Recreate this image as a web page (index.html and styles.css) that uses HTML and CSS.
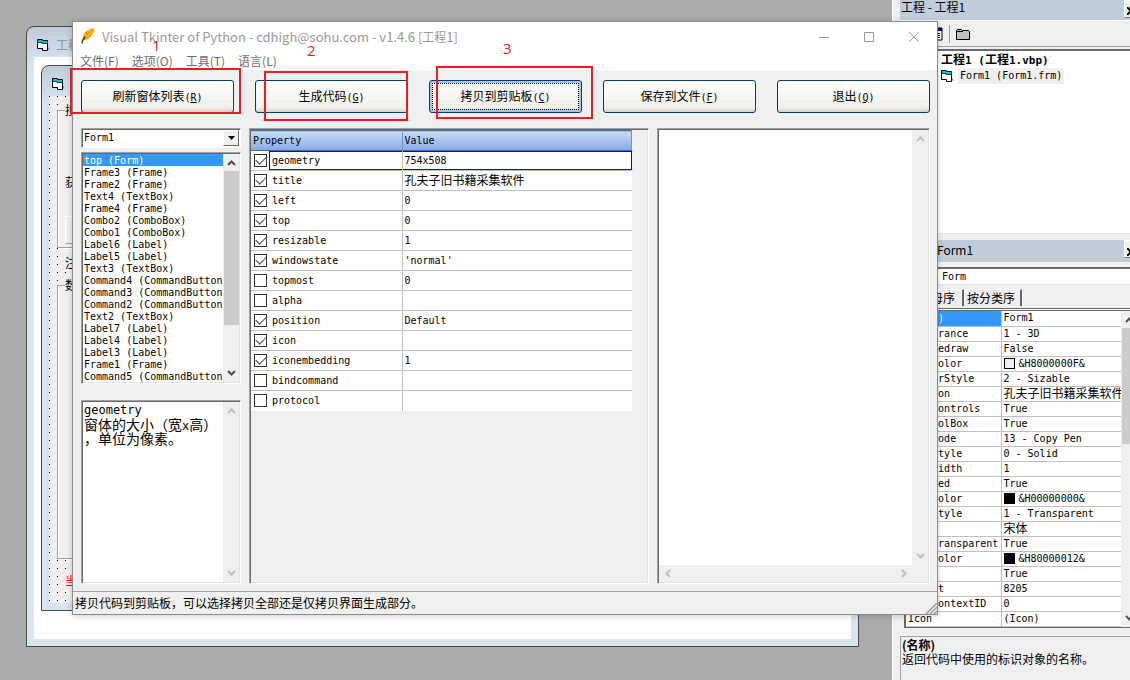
FILE: index.html
```html
<!DOCTYPE html>
<html lang="zh-CN">
<head>
<meta charset="utf-8">
<title>Visual Tkinter of Python</title>
<link rel="stylesheet" href="styles.css">
</head>
<body>
<svg class="defs" aria-hidden="true">
  <symbol id="form-icon" viewBox="0 0 13 12">
    <path d="M.5 .5H5.500V1.500H10.500V11.500H5.500V9.500H.5Z" fill="#fff" stroke="#000"/>
    <path d="M1 1h4v1h5v2H5V3H1Z" fill="#0cc"/>
    <path d="M1 3.500h4v1h5" fill="none" stroke="#000" stroke-width=".8"/>
    <path d="M11 8l2 2.500h-2z" fill="#888"/>
  </symbol>
  <symbol id="up" viewBox="0 0 9 6"><path d="M1 5l3.500-3.500L8 5" fill="none" stroke="currentColor" stroke-width="2"/></symbol>
  <symbol id="down" viewBox="0 0 9 6"><path d="M1 1l3.500 3.500L8 1" fill="none" stroke="currentColor" stroke-width="2"/></symbol>
  <symbol id="left" viewBox="0 0 6 9"><path d="M5 1L1.500 4.500 5 8" fill="none" stroke="currentColor" stroke-width="2"/></symbol>
  <symbol id="right" viewBox="0 0 6 9"><path d="M1 1l3.500 3.500L1 8" fill="none" stroke="currentColor" stroke-width="2"/></symbol>
</svg>

<main class="workspace">
  <section class="mdi">
    <header class="mdi-title"><svg class="form-icon"><use href="#form-icon"/></svg><span>工程1</span></header>
    <div class="mdi-body">
      <div class="designer">
        <header class="mdi-title"><svg class="form-icon"><use href="#form-icon"/></svg></header>
        <div class="canvas">
          <div class="frame frame-first"><span class="legend">搜</span><span class="field">获</span><span class="sunken"></span></div>
          <div class="note">注</div>
          <div class="frame frame-second"><span class="legend">数</span></div>
          <div class="note alert">当</div>
        </div>
      </div>
    </div>
  </section>
</main>

<aside class="dock">
  <header class="dock-title"><span>工程 - 工程1</span><button class="dock-close" aria-label="关闭工程"><svg width="8" height="8"><path d="M0 0l8 8M8 0L0 8" stroke="#000" stroke-width="2"/></svg></button></header>
  <div class="dock-tools">
    <button class="tool" aria-label="查看对象"><svg width="14" height="14"><path d="M1 1h12v12H1z" fill="#fff" stroke="#000"/><path d="M1 1h12v3H1z" fill="#008"/><path d="M3 6.500h3M8 6.500h3M3 8.500h3M8 8.500h3M3 10.500h3M8 10.500h3" stroke="#000"/></svg></button>
    <button class="tool tool-folder" aria-label="切换文件夹"><svg width="16" height="14"><path d="M1.500 12.500V3.500l1-1h4l1 1h6l1 1v8z" fill="#c0c0c0" stroke="#000"/><path d="M2 4.500h6" stroke="#000"/></svg></button>
  </div>
  <div class="tree">
    <div class="tree-root"><span class="cj">工程</span>1 (<span class="cj">工程</span>1.vbp)</div>
    <div class="tree-item"><svg class="form-icon"><use href="#form-icon"/></svg><span class="tree-label">Form1 (Form1.frm)</span></div>
  </div>
  <header class="dock-title props-title"><span>Form1</span><button class="dock-close" aria-label="关闭属性"><svg width="8" height="8"><path d="M0 0l8 8M8 0L0 8" stroke="#000" stroke-width="2"/></svg></button></header>
  <select class="object" aria-label="对象"><option>Form</option></select>
  <div class="tabs"><button class="tab cj active">按字母序</button><button class="tab cj">按分类序</button></div>
  <div class="props">
    <table class="prop-table">
      <tr><td class="picked">(<span class="cj">名称</span>)</td><td>Form1</td></tr>
      <tr><td>Appearance</td><td>1 - 3D</td></tr>
      <tr><td>AutoRedraw</td><td>False</td></tr>
      <tr><td>BackColor</td><td><i class="swatch"></i>&amp;H8000000F&amp;</td></tr>
      <tr><td>BorderStyle</td><td>2 - Sizable</td></tr>
      <tr><td>Caption</td><td><span class="cj">孔夫子旧书籍采集软件</span></td></tr>
      <tr><td>ClipControls</td><td>True</td></tr>
      <tr><td>ControlBox</td><td>True</td></tr>
      <tr><td>DrawMode</td><td>13 - Copy Pen</td></tr>
      <tr><td>DrawStyle</td><td>0 - Solid</td></tr>
      <tr><td>DrawWidth</td><td>1</td></tr>
      <tr><td>Enabled</td><td>True</td></tr>
      <tr><td>FillColor</td><td><i class="swatch black"></i>&amp;H00000000&amp;</td></tr>
      <tr><td>FillStyle</td><td>1 - Transparent</td></tr>
      <tr><td>Font</td><td><span class="cj">宋体</span></td></tr>
      <tr><td>FontTransparent</td><td>True</td></tr>
      <tr><td>ForeColor</td><td><i class="swatch black"></i>&amp;H80000012&amp;</td></tr>
      <tr><td>HasDC</td><td>True</td></tr>
      <tr><td>Height</td><td>8205</td></tr>
      <tr><td>HelpContextID</td><td>0</td></tr>
      <tr><td>Icon</td><td>(Icon)</td></tr>
    </table>
    <div class="scroll dock-scroll"><svg class="v"><use href="#up"/></svg><i class="thumb"></i><svg class="v"><use href="#down"/></svg></div>
  </div>
  <div class="help"><strong>(名称)</strong><span>返回代码中使用的标识对象的名称。</span></div>
</aside>

<section class="window">
  <header class="title">
    <svg class="feather" width="14" height="16" viewBox="0 0 14 16"><path d="M2 12C1 8 3 4 7 2c2-1 4-2 6-1 1 3-1 5-3 7-2 3-4 4-6 4z" fill="#fdb515"/><path d="M13 1C9 4 5 7 3 12m7-4l-4 2M5 4l1 3" fill="none" stroke="#e78a00"/><path d="M1 15.500c0-3 1.500-5 3-7" fill="none" stroke="#5a3800" stroke-width="1.500"/></svg>
    <h1>Visual Tkinter of Python - cdhigh@sohu.com - v1.4.6 [<span class="title-cj">工程</span>1]</h1>
    <div class="caption-buttons">
      <button aria-label="最小化"><svg width="12" height="12"><path d="M1 6.500h10" stroke="#999"/></svg></button>
      <button aria-label="最大化"><svg width="12" height="12"><path d="M1.500 1.500h9v9h-9z" fill="none" stroke="#999"/></svg></button>
      <button aria-label="关闭"><svg width="12" height="12"><path d="M1 1l10 10M11 1L1 11" stroke="#999"/></svg></button>
    </div>
  </header>
  <nav class="menu"><button>文件(F)</button><button>选项(O)</button><button>工具(T)</button><button>语言(L)</button></nav>
  <div class="actions">
    <button><span class="cj">刷新窗体列表</span>(<u>R</u>)</button>
    <button><span class="cj">生成代码</span>(<u>G</u>)</button>
    <button class="focused"><span class="cj">拷贝到剪贴板</span>(<u>C</u>)</button>
    <button><span class="cj">保存到文件</span>(<u>F</u>)</button>
    <button><span class="cj">退出</span>(<u>Q</u>)</button>
  </div>
  <div class="panes">
    <div class="side">
      <div class="combo"><select aria-label="窗体"><option>Form1</option></select><span class="arrow"><svg width="7" height="4"><path d="M0 0h7L3.500 4z"/></svg></span></div>
      <div class="box list-box">
        <ul class="list">
          <li class="on">top (Form)</li><li>Frame3 (Frame)</li><li>Frame2 (Frame)</li><li>Text4 (TextBox)</li><li>Frame4 (Frame)</li><li>Combo2 (ComboBox)</li><li>Combo1 (ComboBox)</li><li>Label6 (Label)</li><li>Label5 (Label)</li><li>Text3 (TextBox)</li><li>Command4 (CommandButton</li><li>Command3 (CommandButton</li><li>Command2 (CommandButton</li><li>Text2 (TextBox)</li><li>Label7 (Label)</li><li>Label4 (Label)</li><li>Label3 (Label)</li><li>Frame1 (Frame)</li><li>Command5 (CommandButton</li>
        </ul>
        <div class="scroll"><svg class="v"><use href="#up"/></svg><i class="thumb"></i><svg class="v"><use href="#down"/></svg></div>
      </div>
      <div class="box about">
        <div class="about-text">
          <div>geometry</div>
          <div><span class="big">窗体的大小（宽</span>x<span class="big">高）</span></div>
          <div><span class="big">，单位为像素。</span></div>
        </div>
        <div class="scroll idle"><svg class="v"><use href="#up"/></svg><svg class="v"><use href="#down"/></svg></div>
      </div>
    </div>
    <div class="box grid-box">
      <table class="grid">
        <thead><tr><th>Property</th><th>Value</th></tr></thead>
        <tbody>
          <tr class="current"><td><label><input type="checkbox" checked><span>geometry</span></label></td><td>754x508</td></tr>
          <tr><td><label><input type="checkbox" checked><span>title</span></label></td><td><span class="cj">孔夫子旧书籍采集软件</span></td></tr>
          <tr><td><label><input type="checkbox" checked><span>left</span></label></td><td>0</td></tr>
          <tr><td><label><input type="checkbox" checked><span>top</span></label></td><td>0</td></tr>
          <tr><td><label><input type="checkbox" checked><span>resizable</span></label></td><td>1</td></tr>
          <tr><td><label><input type="checkbox" checked><span>windowstate</span></label></td><td>'normal'</td></tr>
          <tr><td><label><input type="checkbox"><span>topmost</span></label></td><td>0</td></tr>
          <tr><td><label><input type="checkbox"><span>alpha</span></label></td><td></td></tr>
          <tr><td><label><input type="checkbox" checked><span>position</span></label></td><td>Default</td></tr>
          <tr><td><label><input type="checkbox" checked><span>icon</span></label></td><td></td></tr>
          <tr><td><label><input type="checkbox" checked><span>iconembedding</span></label></td><td>1</td></tr>
          <tr><td><label><input type="checkbox"><span>bindcommand</span></label></td><td></td></tr>
          <tr><td><label><input type="checkbox"><span>protocol</span></label></td><td></td></tr>
        </tbody>
      </table>
    </div>
    <div class="box code">
      <textarea aria-label="代码"></textarea>
      <div class="scroll idle"><svg class="v"><use href="#up"/></svg><svg class="v"><use href="#down"/></svg></div>
      <div class="scroll-x"><svg class="h"><use href="#left"/></svg><svg class="h"><use href="#right"/></svg></div>
    </div>
  </div>
  <footer class="status"><span class="cj">拷贝代码到剪贴板，可以选择拷贝全部还是仅拷贝界面生成部分。</span><svg class="grip" width="11" height="11"><path d="M0 11L11 0M4 11l7-7M8 11l3-3" stroke="#999" stroke-width="1.500"/></svg></footer>
</section>

<div class="mark mark-1"><b>1</b></div>
<div class="mark mark-2"><b>2</b></div>
<div class="mark mark-3"><b>3</b></div>
</body>
</html>
```
FILE: styles.css
```css
* { box-sizing: border-box; }

body {
  margin: 0;
  min-height: 100vh;
  display: flex;
  position: relative;
  overflow: hidden;
  background: #ababab;
  color: #000;
  font: 10px/12px "DejaVu Sans Mono", "Noto Sans CJK SC", monospace;
}

button, select, textarea, input { font: inherit; color: inherit; margin: 0; padding: 0; border: 0; border-radius: 0; background: none; }
table { border-collapse: collapse; table-layout: fixed; }
th, td { padding: 0; text-align: left; font-weight: normal; white-space: nowrap; overflow: hidden; }
.defs { position: absolute; width: 0; height: 0; }
.cj { font: 12px/12px "Noto Sans CJK SC", sans-serif; }
.form-icon { width: 13px; height: 12px; flex: none; }

/* Designer windows behind the tool */
.workspace { flex: 1; position: relative; min-width: 0; }
.mdi {
  position: absolute;
  inset: 26px 33px 33px 26px;
  display: flex;
  flex-direction: column;
  padding: 0 7px 7px;
  border: 1px solid #484848;
  border-radius: 8px 8px 0 0;
  background: linear-gradient(#bfcddb, #d7e4f2 40px);
}
.mdi-title {
  height: 30px;
  padding: 6px 3px 0;
  display: flex;
  align-items: center;
  gap: 6px;
  color: #8c96a0;
  font: 12px/16px "Noto Sans CJK SC", sans-serif;
}
.mdi-body { flex: 1; display: flex; background: #fff; padding: 8px 8px 28px 7px; }
.designer {
  flex: 1;
  display: flex;
  flex-direction: column;
  padding: 0 7px 7px;
  border: 1px solid #484848;
  border-radius: 8px 8px 0 0;
  background: linear-gradient(#bfcddb, #d7e4f2 40px);
}
.canvas {
  flex: 1;
  padding: 14px 8px 0;
  background: conic-gradient(from 270deg at 1px 1px, #000 90deg, #efefef 0) 0 0 / 8px 8px;
  font: 12px/16px "Noto Sans CJK SC", sans-serif;
}
.frame { border: 1px solid #a0a0a0; box-shadow: 1px 1px #fff, inset 1px 1px #fff; background: #efefef; padding: 0 7px; display: flex; flex-direction: column; }
.frame-first { height: 138px; }
.frame-second { height: 274px; margin-top: 14px; }
.legend { background: #efefef; width: 16px; margin-top: -9px; }
.field { margin-top: 56px; }
.sunken { margin-top: 26px; height: 28px; border: 1px solid #a0a0a0; border-top-color: #fff; border-left-color: #fff; }
.note { margin: 7px 0 0 8px; width: 40px; background: #efefef; }
.alert { margin-top: 14px; color: #f00; }

/* Docked panels */
.dock {
  width: 238px;
  flex: none;
  height: 100vh;
  overflow: hidden;
  display: flex;
  flex-direction: column;
  padding-left: 7px;
  border-left: 1px solid #fff;
  background: #efefef;
}
.dock-title {
  height: 20px;
  flex: none;
  display: flex;
  justify-content: space-between;
  padding-left: 1px;
  background: #bfcddb;
  font: 12px/13px "Noto Sans CJK SC", sans-serif;
}
.dock-close { width: 6px; height: 18px; overflow: hidden; padding-left: 2px; background: #efefef; border: 1px solid #fff; border-width: 1px 0 1px 1px; border-bottom-color: #777; }
.dock-tools { height: 27px; flex: none; display: flex; gap: 6px; padding: 4px 0 0 29px; border-top: 1px solid #fff; border-bottom: 1px solid #a0a0a0; }
.tool { display: flex; height: 18px; align-items: center; }
.tool-folder { border-left: 1px solid #a0a0a0; padding-left: 5px; }
.tree { height: 185px; flex: none; margin-top: 2px; padding: 2px 0 0 41px; border-top: 2px solid #696969; border-bottom: 1px solid #e3e3e3; background: #fff; }
.tree-root { font-weight: bold; font-size: 11px; line-height: 14px; white-space: nowrap; }
.tree-root .cj { font-weight: bold; }
.tree-item { display: flex; align-items: center; gap: 4px; }
.tree-label { background: #efefef; line-height: 16px; padding: 0 2px; }
.props-title { height: 22px; margin-top: 6px; padding-left: 37px; line-height: 20px; }
.object { appearance: none; height: 18px; flex: none; margin-top: 5px; padding-left: 42px; border-top: 2px solid #696969; border-bottom: 1px solid #e3e3e3; background: #fff; }
.tabs { display: flex; height: 23px; flex: none; padding: 4px 0 0; }
.tab { height: 17px; padding: 0 5px 0 3px; border-top: 1px solid #fff; border-right: 2px solid #696969; }
.tab.active { padding: 0 7px; }
.props { flex: none; display: flex; margin-left: 4px; border: solid #696969; border-width: 3px 0 1px 2px; border-top-style: double; background: #fff; }
.prop-table { width: 215px; flex: none; }
.prop-table td { height: 15px; line-height: 12px; border-bottom: 1px solid #c0c0c0; padding-left: 2px; }
.prop-table td:first-child { width: 95px; border-right: 1px solid #c0c0c0; }
.prop-table .picked { background: #39f; color: #fff; }
.swatch { display: inline-block; width: 11px; height: 11px; margin-right: 4px; border: 1px solid #000; background: #efefef; vertical-align: middle; }
.black { background: #000; }
.help { flex: 1; display: flex; flex-direction: column; margin-top: 8px; padding: 1px; border: 1px solid #a0a0a0; border-right: 0; border-bottom: 0; font: 12px/14px "Noto Sans CJK SC", sans-serif; white-space: nowrap; }

/* Main window */
.window {
  position: absolute;
  inset: 21px 192px 65px 72px;
  display: flex;
  flex-direction: column;
  border: 1px solid #8c8c8c;
  background: #efefef;
  box-shadow: 0 1px 6px rgba(0, 0, 0, .2);
}
.title { display: flex; align-items: center; height: 30px; flex: none; padding: 0 17px 0 8px; gap: 7px; background: #fff; color: #999; }
.title h1 { flex: 1; margin: 0; font: 13px/16px "Noto Sans CJK SC", sans-serif; white-space: nowrap; }
.title-cj { font-size: 12px; }
.feather { margin-bottom: 2px; }
.caption-buttons { display: flex; gap: 33px; }
.caption-buttons button { display: flex; }
.menu { display: flex; height: 18px; flex: none; gap: 13px; padding-left: 7px; background: #fff; color: #6d6d6d; font: 12px/18px "Noto Sans CJK SC", sans-serif; }
.menu button { line-height: 18px; }
.actions { display: flex; justify-content: space-between; flex: none; padding: 10px 7px 0 8px; }
.actions button {
  width: 153px;
  height: 33px;
  border: 1px solid #003c74;
  border-radius: 3px;
  background: linear-gradient(#fff, #f0f0ea 85%, #d8d2c4);
}
.actions .focused { box-shadow: inset 0 0 0 2px #a6c3f0; outline: 1px dotted #000; outline-offset: -4px; }
.panes { flex: 1; min-height: 0; display: grid; grid-template-columns: 160px 400px 1fr; gap: 8px; padding: 15px 7px 7px 8px; }
.side { display: flex; flex-direction: column; min-height: 0; }
.box { border: 1px solid; border-color: #a0a0a0 #fff #fff #a0a0a0; box-shadow: inset 1px 1px #696969, inset -1px -1px #e3e3e3; padding: 1px; min-width: 0; }
.combo { display: flex; height: 20px; flex: none; border: 1px solid; border-color: #a0a0a0 #fff #fff #a0a0a0; box-shadow: inset 1px 1px #696969; padding: 1px; background: #fff; }
.combo select { appearance: none; flex: 1; padding-left: 1px; }
.arrow { width: 16px; display: flex; align-items: center; justify-content: center; background: #efefef; border: 1px solid; border-color: #fff #696969 #696969 #fff; }
.list-box { display: flex; height: 232px; margin-top: 4px; flex: none; background: #fff; }
.list { flex: 1; min-width: 0; margin: 0; padding: 0; list-style: none; overflow: hidden; white-space: nowrap; }
.list li { height: 12px; line-height: 13px; padding-left: 1px; }
.list .on { background: #39f; color: #fff; }
.scroll { width: 16px; flex: none; display: flex; flex-direction: column; align-items: center; padding: 6px 0; background: #efefef; color: #505050; }
.scroll .v { width: 9px; height: 6px; flex: none; }
.scroll .v:last-child { margin-top: auto; }
.thumb { width: 15px; height: 154px; margin-top: 5px; background: #cbcbcb; }
.idle, .scroll-x { color: #bfbfbf; }
.dock-scroll .thumb { height: 116px; }
.about { flex: 1; display: flex; margin-top: 16px; background: #fff; }
.about-text { flex: 1; padding: 1px 0 0 1px; font-size: 12px; line-height: 14px; white-space: nowrap; }
.about-text div { height: 14px; }
.big { font: 14px/14px "Noto Sans CJK SC", sans-serif; }
.grid { width: 381px; background: #fff; }
.grid th { height: 20px; padding-left: 2px; background: linear-gradient(#c8dcf8, #86aae4); border-top: 1px solid #3a6ea5; border-bottom: 1px solid #3a6ea5; border-right: 1px solid #6f94c8; }
.grid th:first-child { width: 151px; }
.grid td { height: 20px; padding-left: 2px; border-bottom: 1px solid #c0c0c0; }
.grid td:first-child { padding-left: 3px; border-right: 1px solid #c0c0c0; }
.grid tr:last-child td { border-bottom: 0; }
.grid label { display: flex; align-items: center; gap: 2px; }
.grid label span { flex: 1; padding-left: 3px; line-height: 17px; }
.grid input { appearance: none; width: 13px; height: 13px; border: 1px solid #333; background: #fff; display: grid; place-items: center; flex: none; }
.grid input:checked::before { content: ""; width: 9px; height: 5px; margin-bottom: 3px; border: solid #444; border-width: 0 0 1px 1px; transform: rotate(-45deg); }
.current td:last-child { box-shadow: inset 0 1px #00f, inset -1px -1px #00f; }
.current label span { box-shadow: inset 1px 1px #00f, inset 0 -1px #00f; line-height: 19px; }
.code { display: grid; grid-template: 1fr 17px / 1fr 16px; background: #fff; }
.code textarea { resize: none; width: 100%; height: 100%; outline: 0; }
.scroll-x { grid-column: 1 / -1; display: flex; align-items: center; justify-content: space-between; padding: 0 21px 0 6px; background: #efefef; }
.scroll-x .h { width: 6px; height: 9px; }
.code .scroll, .scroll-x { margin: 0; }
.status { height: 23px; flex: none; display: flex; align-items: center; justify-content: space-between; padding-left: 2px; border-top: 1px solid #a0a0a0; }
.grip { align-self: flex-end; }

/* Numbered callouts */
.mark { position: absolute; border: 2px solid #ed1c24; color: #ed1c24; font: 15px/16px "Open Sans", sans-serif; pointer-events: none; }
.mark b { position: absolute; font-weight: normal; }
.mark-1 { left: 70px; top: 68px; width: 171px; height: 46px; }
.mark-1 b { left: 80px; top: -33px; }
.mark-2 { left: 264px; top: 71px; width: 144px; height: 50px; }
.mark-2 b { left: 41px; top: -31px; }
.mark-3 { left: 436px; top: 66px; width: 157px; height: 53px; }
.mark-3 b { left: 65px; top: -28px; }
```
